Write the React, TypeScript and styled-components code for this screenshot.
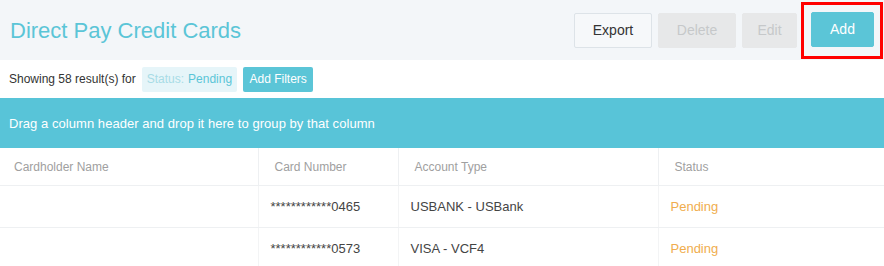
import React from 'react';
import styled, { createGlobalStyle } from 'styled-components';

const GlobalStyle = createGlobalStyle`
  body {
    margin: 0;
    background: #fff;
    font-family: 'Liberation Sans', Arial, sans-serif;
  }
`;

const Page = styled.div`
  width: 884px;
  height: 266px;
  overflow: hidden;
  background: #fff;
`;

const Header = styled.div`
  height: 60px;
  background: #f3f6f9;
  display: flex;
  align-items: center;
  justify-content: space-between;
  padding-left: 10px;
  box-sizing: border-box;
`;

const Title = styled.h1`
  margin: 0;
  font-size: 22px;
  font-weight: normal;
  color: #5bc5d7;
  padding-top: 1px;
`;

const Actions = styled.div`
  display: flex;
  align-items: center;
  gap: 6px;
  margin-right: 1px;
`;

const Button = styled.button<{ $variant?: 'default' | 'disabled' | 'primary'; $w: number }>`
  width: ${(p) => p.$w}px;
  height: 35px;
  border-radius: 2px;
  font-family: inherit;
  font-size: 14px;
  cursor: pointer;
  border: 1px solid
    ${(p) => (p.$variant === 'primary' ? '#5bc5d7' : p.$variant === 'disabled' ? '#e7e8e9' : '#dde3e8')};
  background: ${(p) => (p.$variant === 'primary' ? '#5bc5d7' : p.$variant === 'disabled' ? '#e7e8e9' : '#f6f8fa')};
  color: ${(p) => (p.$variant === 'primary' ? '#fff' : p.$variant === 'disabled' ? '#c6c8ca' : '#333')};
`;

const Highlight = styled.div`
  border: 3px solid #ff0000;
  padding: 7px 6px 9px 7px;
  margin-left: -2px;
`;

const FilterRow = styled.div`
  height: 38px;
  display: flex;
  align-items: center;
  padding-left: 9px;
  gap: 6px;
  font-size: 12px;
  color: #333;
`;

const Chip = styled.span`
  display: inline-flex;
  align-items: center;
  height: 25px;
  padding: 0 5px;
  background: #e6f5f9;
  border-radius: 2px;
  color: #5bc5d7;
  span {
    color: #a8dce6;
    margin-right: 4px;
  }
`;

const FilterButton = styled.button`
  height: 25px;
  width: 70px;
  border: none;
  border-radius: 2px;
  background: #5bc5d7;
  color: #fff;
  font-family: inherit;
  font-size: 12px;
  padding: 0;
`;

const GroupBand = styled.div`
  height: 50px;
  background: #58c4d8;
  color: #fff;
  display: flex;
  align-items: center;
  padding-left: 9px;
  font-size: 13px;
  font-weight: 500;
  letter-spacing: 0.05px;
`;

const Table = styled.table`
  width: 884px;
  border-collapse: collapse;
  table-layout: fixed;
`;

const Th = styled.th`
  height: 37px;
  padding: 0 0 0 16px;
  text-align: left;
  font-weight: normal;
  font-size: 12px;
  color: #a0a0a0;
  border-left: 1px solid #eef0f2;
  border-bottom: 1px solid #eef0f2;
  &:first-child {
    border-left: none;
    padding-left: 14px;
  }
`;

const Td = styled.td<{ $status?: boolean }>`
  height: 41px;
  padding: 0 0 0 12px;
  font-size: 13px;
  color: ${(p) => (p.$status ? '#f0ad4e' : '#444')};
  border-left: 1px solid #f3f4f5;
  border-bottom: 1px solid #eef0f2;
  &:first-child {
    border-left: none;
  }
`;

const columns = [
  { title: 'Cardholder Name', width: 258 },
  { title: 'Card Number', width: 140 },
  { title: 'Account Type', width: 260 },
  { title: 'Status', width: 226 },
];

const rows = [
  { name: '', card: '************0465', account: 'USBANK - USBank', status: 'Pending' },
  { name: '', card: '************0573', account: 'VISA - VCF4', status: 'Pending' },
];

const App: React.FC = () => {
  return (
    <Page>
      <GlobalStyle />
      <Header>
        <Title>Direct Pay Credit Cards</Title>
        <Actions>
          <Button $w={78}>Export</Button>
          <Button $w={78} $variant="disabled">Delete</Button>
          <Button $w={55} $variant="disabled">Edit</Button>
          <Highlight>
            <Button $w={63} $variant="primary">Add</Button>
          </Highlight>
        </Actions>
      </Header>
      <FilterRow>
        <span>Showing 58 result(s) for</span>
        <Chip>
          <span>Status:</span>Pending
        </Chip>
        <FilterButton>Add Filters</FilterButton>
      </FilterRow>
      <GroupBand>Drag a column header and drop it here to group by that column</GroupBand>
      <Table>
        <colgroup>
          {columns.map((c) => (
            <col key={c.title} style={{ width: c.width }} />
          ))}
        </colgroup>
        <thead>
          <tr>
            {columns.map((c) => (
              <Th key={c.title}>{c.title}</Th>
            ))}
          </tr>
        </thead>
        <tbody>
          {rows.map((r, i) => (
            <tr key={i}>
              <Td>{r.name}</Td>
              <Td>{r.card}</Td>
              <Td>{r.account}</Td>
              <Td $status>{r.status}</Td>
            </tr>
          ))}
        </tbody>
      </Table>
    </Page>
  );
};

export default App;
